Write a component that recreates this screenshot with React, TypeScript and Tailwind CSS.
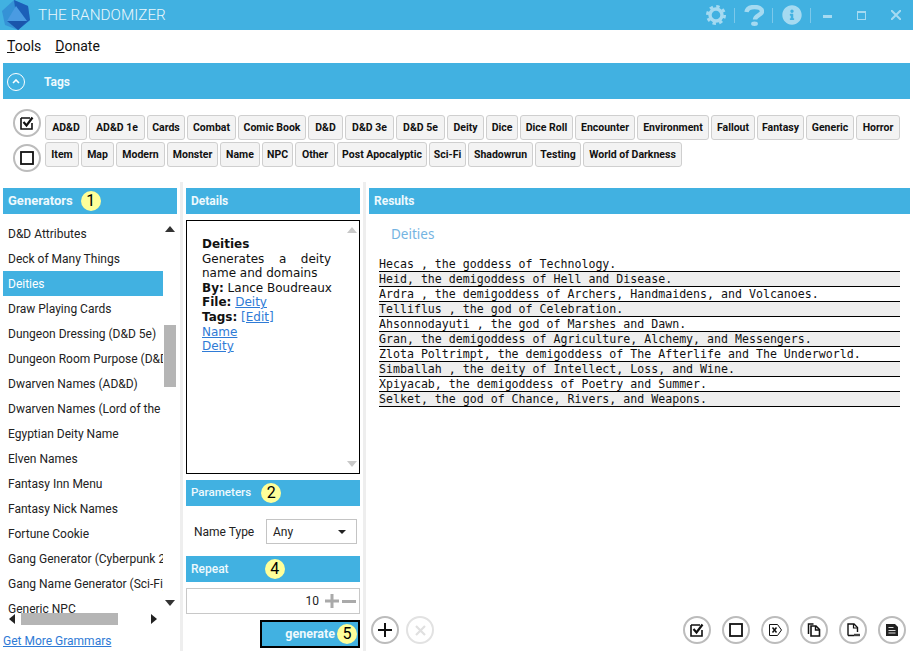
import React from 'react';
import { FaInfoCircle } from 'react-icons/fa';

const tagRows = [
    [
        { label: 'AD&D', w: 'w-[42px]' }, { label: 'AD&D 1e', w: 'w-[56px]' }, { label: 'Cards', w: 'w-[38px]' },
        { label: 'Combat', w: 'w-[49px]' }, { label: 'Comic Book', w: 'w-[68px]' }, { label: 'D&D', w: 'w-[35px]' },
        { label: 'D&D 3e', w: 'w-[49px]' }, { label: 'D&D 5e', w: 'w-[49px]' }, { label: 'Deity', w: 'w-[37px]' },
        { label: 'Dice', w: 'w-[32px]' }, { label: 'Dice Roll', w: 'w-[53px]' }, { label: 'Encounter', w: 'w-[60px]' },
        { label: 'Environment', w: 'w-[72px]' }, { label: 'Fallout', w: 'w-[44px]' }, { label: 'Fantasy', w: 'w-[47px]' },
        { label: 'Generic', w: 'w-[48px]' }, { label: 'Horror', w: 'w-[44px]' },
    ],
    [
        { label: 'Item', w: 'w-[34px]' }, { label: 'Map', w: 'w-[33px]' }, { label: 'Modern', w: 'w-[49px]' },
        { label: 'Monster', w: 'w-[51px]' }, { label: 'Name', w: 'w-[40px]' }, { label: 'NPC', w: 'w-[31px]' },
        { label: 'Other', w: 'w-[40px]' }, { label: 'Post Apocalyptic', w: 'w-[90px]' }, { label: 'Sci-Fi', w: 'w-[37px]' },
        { label: 'Shadowrun', w: 'w-[65px]' }, { label: 'Testing', w: 'w-[46px]' }, { label: 'World of Darkness', w: 'w-[99px]' },
    ],
];

const generators = [
    'D&D Attributes', 'Deck of Many Things', 'Deities', 'Draw Playing Cards', 'Dungeon Dressing (D&D 5e)',
    'Dungeon Room Purpose (D&D 5e)', 'Dwarven Names (AD&D)', 'Dwarven Names (Lord of the Rings)', 'Egyptian Deity Name',
    'Elven Names', 'Fantasy Inn Menu', 'Fantasy Nick Names', 'Fortune Cookie', 'Gang Generator (Cyberpunk 2020)',
    'Gang Name Generator (Sci-Fi)', 'Generic NPC',
];

const results = [
    'Hecas , the goddess of Technology.',
    'Heid, the demigoddess of Hell and Disease.',
    'Ardra , the demigoddess of Archers, Handmaidens, and Volcanoes.',
    'Telliflus , the god of Celebration.',
    'Ahsonnodayuti , the god of Marshes and Dawn.',
    'Gran, the demigoddess of Agriculture, Alchemy, and Messengers.',
    'Zlota Poltrimpt, the demigoddess of The Afterlife and The Underworld.',
    'Simballah , the deity of Intellect, Loss, and Wine.',
    'Xpiyacab, the demigoddess of Poetry and Summer.',
    'Selket, the god of Chance, Rivers, and Weapons.',
];

const Badge = ({ n }: { n: number }) => (
    <span className="flex h-5 w-5 shrink-0 items-center justify-center rounded-full bg-[#ffff99] text-[16px] font-normal text-black">{n}</span>
);

const Header = ({ title, badge, className }: { title: string; badge?: number; className?: string }) => (
    <div className={`flex h-[26px] shrink-0 items-center bg-[#41b1e1] pl-[5px] text-[#eef9fd] ${className ?? 'text-[12px] font-bold'}`}>
        <span>{title}</span>
        {badge !== undefined && <Badge n={badge} />}
    </div>
);

const Round = ({ children, muted }: { children: React.ReactNode; muted?: boolean }) => (
    <button className={`flex h-7 w-7 shrink-0 items-center justify-center rounded-full border-2 ${muted ? 'border-[#e2e2e2]' : 'border-[#bcbcbc]'}`}>
        {children}
    </button>
);

const CheckedBox = () => (
    <svg width="14" height="14" viewBox="0 0 14 14" fill="none" stroke="#111">
        <path d="M1 2h9M1 2v11h11V7" strokeWidth="1.6" />
        <path d="M3.5 6l3 3.5L12.5 1.5" strokeWidth="2.2" />
    </svg>
);

const EmptyBox = () => (
    <svg width="14" height="14" viewBox="0 0 14 14" fill="none" stroke="#111">
        <rect x="1" y="1" width="12" height="12" strokeWidth="1.8" />
    </svg>
);

const VariableTag = () => (
    <svg width="16" height="14" viewBox="0 0 16 14" fill="none" stroke="#111">
        <path d="M2.5 1.5h8l4 5.5-4 5.5h-8z" strokeWidth="1" />
        <path d="M5.5 4.5l4 5M9.5 4.5l-4 5" strokeWidth="1.5" />
    </svg>
);

const CopyPages = () => (
    <svg width="14" height="14" viewBox="0 0 14 14" fill="none" stroke="#111">
        <path d="M1.5 11V1h5" strokeWidth="1.5" />
        <path d="M4 13V3h5l3.5 3.5V13z" fill="#fff" strokeWidth="1.6" />
        <path d="M8.5 3v4h4" strokeWidth="1.4" />
    </svg>
);

const SaveAs = () => (
    <svg width="15" height="14" viewBox="0 0 15 14" fill="none" stroke="#111">
        <path d="M2 12.5V1h6l3.5 3.5V9M2 12.5h6" strokeWidth="1.4" />
        <path d="M7.5 1v4h4" strokeWidth="1.2" />
        <path d="M8 12h6" strokeWidth="2.4" stroke="#444" />
    </svg>
);

const SaveFile = () => (
    <svg width="14" height="14" viewBox="0 0 14 14">
        <path d="M1 1h9l3 3v9H1z" fill="#222" />
        <path d="M3.5 4h5v1h-5zM3.5 7h7v1h-7zM3.5 9.5h7v1h-7z" fill="#ddd" />
    </svg>
);

const Logo = () => (
    <svg width="28" height="30" viewBox="0 0 28 30">
        <path d="M12 0 26 6l2 14-12 10L3 25 0 11z" fill="#3592d6" />
        <path d="M12 0 26 6l2 14-12 10z" fill="#1c5fb8" />
        <path d="M14 6 25 21H5z" fill="#4a9be2" />
        <path d="M5 21h20l-9 9z" fill="#1a55ab" />
    </svg>
);

const Gear = () => (
    <svg width="20" height="20" viewBox="0 0 20 20" fill="none" stroke="#a5daf1">
        <circle cx="10" cy="10" r="6" strokeWidth="3.4" />
        <circle cx="10" cy="10" r="8.6" strokeWidth="2.8" strokeDasharray="3.4 3.35" />
    </svg>
);

const BigQuestion = () => (
    <svg width="20" height="21" viewBox="0 0 20 21" fill="none" stroke="#a5daf1">
        <path d="M2.5 7C3 3.5 6.5 2 10.5 2S18 3.5 18 6.5c0 3.5-7 3.7-7 8" strokeWidth="4.4" />
        <ellipse cx="10.5" cy="18.8" rx="3.4" ry="2.2" fill="#a5daf1" stroke="none" />
    </svg>
);

const Arrow = ({ dir, className }: { dir: 'up' | 'down' | 'left' | 'right'; className: string }) => {
    const cls = {
        up: 'border-x-[5px] border-b-[6px] border-x-transparent',
        down: 'border-x-[5px] border-t-[6px] border-x-transparent',
        left: 'border-y-[5px] border-r-[6px] border-y-transparent',
        right: 'border-y-[5px] border-l-[6px] border-y-transparent',
    }[dir];
    return <span className={`block h-0 w-0 shrink-0 ${cls} ${className}`} />;
};

const Link = ({ children }: { children: React.ReactNode }) => (
    <a className="text-[#2f7bd6] underline">{children}</a>
);

export default function App() {
    return (
        <div className="flex h-[651px] w-[913px] flex-col overflow-hidden bg-white font-['Roboto',sans-serif] text-[#222]">
            <div className="flex h-[30px] shrink-0 items-center bg-[#41b1e1]">
                <div className="ml-[2px] w-[36px]"><Logo /></div>
                <span className="text-[15.3px] font-light text-[#eaf7fc]">THE RANDOMIZER</span>
                <div className="ml-auto flex items-center">
                    <Gear />
                    <span className="ml-[8px] mr-[9px] h-[15px] w-px bg-[#7cc8ea]" />
                    <BigQuestion />
                    <span className="ml-[8px] mr-[9px] h-[15px] w-px bg-[#7cc8ea]" />
                    <FaInfoCircle size={20} className="text-[#a5daf1]" />
                    <span className="ml-[8px] mr-[12px] h-[15px] w-px bg-[#7cc8ea]" />
                    <span className="mt-[3px] h-[3px] w-[9px] bg-[#a5daf1]" />
                    <span className="ml-[25px] h-[9px] w-[9px] border border-t-2 border-[#a5daf1]" />
                    <svg className="ml-[25px] mr-[12px]" width="10" height="10" viewBox="0 0 10 10" stroke="#a5daf1" strokeWidth="2">
                        <path d="M0 0l10 10M10 0L0 10" />
                    </svg>
                </div>
            </div>

            <div className="flex h-[33px] shrink-0 items-center gap-[14px] pl-[7px] text-[14px] text-[#111]">
                <span><span className="underline">T</span>ools</span>
                <span><span className="underline">D</span>onate</span>
            </div>

            <div className="mx-[3px] flex h-[36px] shrink-0 items-center bg-[#41b1e1] pt-[1px] text-[12px] font-bold text-[#eef9fd]">
                <span className="ml-[4px] flex h-[18px] w-[18px] items-center justify-center rounded-full border border-white">
                    <svg width="8" height="5" viewBox="0 0 8 5" fill="none" stroke="#fff" strokeWidth="1.6"><path d="M1 4l3-3 3 3" /></svg>
                </span>
                <span className="ml-[19px]">Tags</span>
            </div>

            <div className="flex h-[86px] shrink-0 pl-[13px] pt-[16px]">
                <div className="mt-[-6px] flex flex-col gap-[7px]">
                    <Round><CheckedBox /></Round>
                    <Round><EmptyBox /></Round>
                </div>
                <div className="ml-[4px] flex flex-col gap-[2px]">
                    {tagRows.map((row, i) => (
                        <div key={i} className="flex gap-[2px]">
                            {row.map(tag => (
                                <span key={tag.label} className={`flex h-[25px] items-center justify-center whitespace-nowrap rounded-[3px] border border-[#cfcfcf] bg-[#f3f3f3] text-[10.5px] font-bold text-[#111] ${tag.w}`}>
                                    {tag.label}
                                </span>
                            ))}
                        </div>
                    ))}
                </div>
            </div>

            <div className="flex min-h-0 flex-1">
                <div className="ml-[3px] flex w-[174px] shrink-0 flex-col">
                    <div className="mt-[3px]"><Header title="Generators" badge={1} className="gap-[8px] text-[13px] font-bold" /></div>
                    <div className="flex min-h-0 flex-1">
                        <div className="mt-[7px] h-[392px] w-[160px] overflow-hidden text-[12px]">
                            {generators.map(g => (
                                <div key={g} className={`flex h-[25px] items-center overflow-hidden whitespace-nowrap pl-[5px] ${g === 'Deities' ? 'bg-[#41b1e1] text-white' : ''}`}>
                                    {g}
                                </div>
                            ))}
                        </div>
                        <div className="ml-[1px] flex w-[12px] flex-col items-center">
                            <Arrow dir="up" className="mt-[12px] border-b-[#333]" />
                            <div className="mt-[93px] h-[62px] w-[12px] bg-[#b5b5b5]" />
                            <Arrow dir="down" className="mt-[213px] border-t-[#333]" />
                        </div>
                    </div>
                    <div className="flex h-[12px] shrink-0 items-center">
                        <Arrow dir="left" className="ml-[6px] border-r-[#222]" />
                        <div className="ml-[6px] h-[12px] w-[97px] bg-[#b5b5b5]" />
                        <Arrow dir="right" className="ml-[33px] border-l-[#222]" />
                    </div>
                    <div className="mb-[2px] mt-[8px] text-[12px] leading-[16px]"><Link>Get More Grammars</Link></div>
                </div>

                <div className="ml-[3px] mt-[-3px] h-[calc(100%+3px)] w-[3px] shrink-0 bg-[#eeeeee]" />

                <div className="ml-[3px] flex w-[174px] shrink-0 flex-col">
                    <div className="mt-[3px]"><Header title="Details" /></div>
                    <div className="relative mt-[6px] h-[254px] border border-black pl-[15px] pr-[28px] pt-[16px] font-['DejaVu_Sans',sans-serif] text-[12px] leading-[14.6px] text-[#111]">
                        <div className="font-bold">Deities</div>
                        <p className="text-justify">Generates a deity name and domains</p>
                        <div className="whitespace-nowrap"><b>By:</b> Lance Boudreaux</div>
                        <div><b>File:</b> <Link>Deity</Link></div>
                        <div><b>Tags:</b> <Link>[Edit]</Link></div>
                        <div><Link>Name</Link></div>
                        <div><Link>Deity</Link></div>
                        <Arrow dir="up" className="absolute right-[2px] top-[6px] border-b-[#c8c8c8]" />
                        <Arrow dir="down" className="absolute bottom-[6px] right-[2px] border-t-[#c8c8c8]" />
                    </div>
                    <div className="mt-[6px]"><Header title="Parameters" badge={2} className="gap-[10px] text-[11.6px] font-medium" /></div>
                    <div className="mt-[13px] flex h-[25px] items-center pl-[8px] text-[12px]">
                        <span>Name Type</span>
                        <div className="ml-auto mr-[3px] flex h-[25px] w-[91px] items-center justify-between border border-[#c4c4c4] pl-[6px] pr-[10px]">
                            <span>Any</span>
                            <span className="block h-0 w-0 border-x-[4px] border-t-[4px] border-x-transparent border-t-[#222]" />
                        </div>
                    </div>
                    <div className="mt-[12px]"><Header title="Repeat" badge={4} className="gap-[36px] text-[12px] font-medium" /></div>
                    <div className="mt-[6px] flex h-[26px] items-center justify-end border border-[#c8c8c8] pr-[3px] text-[12px]">
                        <span>10</span>
                        <svg className="ml-[6px]" width="14" height="14" viewBox="0 0 14 14" fill="#aaa"><path d="M5.5 0h3v5.5H14v3H8.5V14h-3V8.5H0v-3h5.5z" /></svg>
                        <span className="ml-[3px] h-[3px] w-[14px] bg-[#aaa]" />
                    </div>
                    <button className="ml-auto mt-[6px] flex h-[28px] w-[100px] items-center justify-end gap-[2px] border-2 border-black bg-[#41b1e1] pr-[1px] text-[12.5px] font-bold text-[#eef9fd]">
                        <span>generate</span>
                        <Badge n={5} />
                    </button>
                </div>

                <div className="ml-[3px] mt-[-3px] h-[calc(100%+3px)] w-[3px] shrink-0 bg-[#eeeeee]" />

                <div className="ml-[3px] flex w-[541px] shrink-0 flex-col">
                    <div className="mt-[3px]"><Header title="Results" /></div>
                    <div className="ml-[22px] mt-[11px] font-['Noto_Sans',sans-serif] text-[13.5px] leading-[18px] text-[#74b4e2]">Deities</div>
                    <div className="ml-[10px] mr-[10px] mt-[14px] font-['DejaVu_Sans_Mono',monospace] text-[11.6px] leading-[14px] text-[#111]">
                        {results.map((r, i) => (
                            <div key={r} className={`h-[15px] whitespace-nowrap border-b border-black ${i % 2 === 1 ? 'bg-[#eeeeee]' : ''}`}>
                                {r}
                            </div>
                        ))}
                    </div>
                    <div className="mb-[7px] mt-auto flex items-center pl-[2px] pr-[4px]">
                        <Round>
                            <svg width="14" height="14" viewBox="0 0 14 14" fill="#111"><path d="M6 0h2v6h6v2H8v6H6V8H0V6h6z" /></svg>
                        </Round>
                        <div className="ml-[7px]">
                            <Round muted>
                                <svg width="11" height="11" viewBox="0 0 11 11" stroke="#e0e0e0" strokeWidth="2.2"><path d="M1 1l9 9M10 1l-9 9" /></svg>
                            </Round>
                        </div>
                        <div className="ml-auto flex gap-[11px]">
                            <Round><CheckedBox /></Round>
                            <Round><EmptyBox /></Round>
                            <Round><VariableTag /></Round>
                            <Round><CopyPages /></Round>
                            <Round><SaveAs /></Round>
                            <Round><SaveFile /></Round>
                        </div>
                    </div>
                </div>
            </div>
        </div>
    );
}
